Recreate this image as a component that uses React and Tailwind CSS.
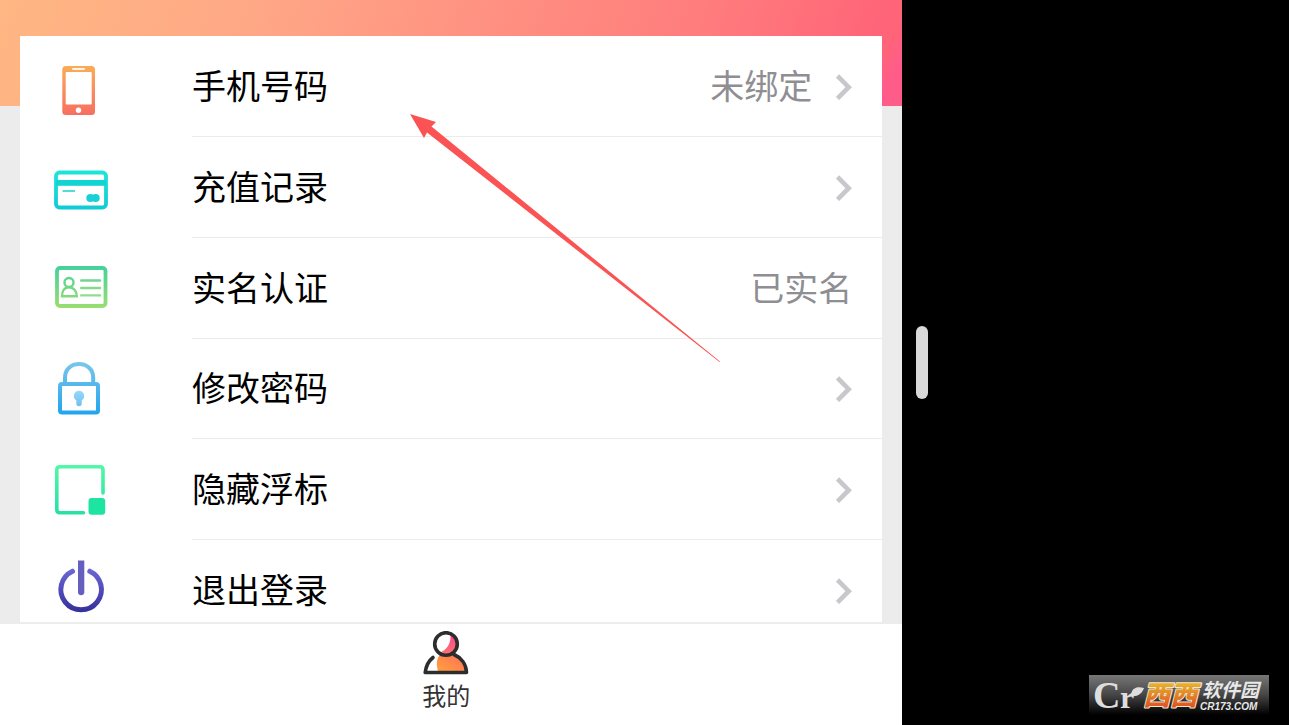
import React from "react";

function Gradient({ id, from, to, top = 0, bottom = 64 }) {
  return (
    <defs>
      <linearGradient id={id} gradientUnits="userSpaceOnUse" x1="0" y1={top} x2="0" y2={bottom}>
        <stop offset="0" stopColor={from} />
        <stop offset="1" stopColor={to} />
      </linearGradient>
    </defs>
  );
}

function IconFrame({ viewBox = "0 0 60 64", children }) {
  return (
    <svg className="h-16 w-[60px]" viewBox={viewBox} fill="none" aria-hidden="true">
      {children}
    </svg>
  );
}

function PhoneIcon() {
  return (
    <IconFrame>
      <Gradient id="phone" from="#f9ad58" to="#f86e62" top={12} bottom={61} />
      <rect x="12.3" y="12" width="32.7" height="49" rx="3.5" fill="url(#phone)" />
      <rect x="15.7" y="18" width="26" height="32.5" rx="1" fill="#fff" />
      <rect x="22" y="14" width="13" height="2" rx="1" fill="#fff3e0" />
      <circle cx="28.5" cy="56.3" r="2.7" fill="#fff" />
    </IconFrame>
  );
}

function CardIcon() {
  return (
    <IconFrame>
      <Gradient id="card" from="#1fe6d8" to="#0fcbd6" top={15} bottom={54} />
      <rect x="6" y="17.5" width="50" height="35" rx="3.5" stroke="url(#card)" strokeWidth="3.8" />
      <rect x="6" y="25" width="50" height="5.8" fill="#11d5d5" />
      <path d="M12.5 36H25" stroke="#3edad8" strokeWidth="1.8" />
      <circle cx="40.3" cy="43" r="4" fill="#18d0d5" />
      <circle cx="45.7" cy="43" r="4" fill="#18d0d5" />
    </IconFrame>
  );
}

function IdIcon() {
  return (
    <IconFrame>
      <Gradient id="idcard" from="#43d19c" to="#9ade70" top={10} bottom={52} />
      <g stroke="url(#idcard)">
        <rect x="7" y="12" width="48.5" height="38" rx="3" strokeWidth="3.8" />
        <circle cx="19" cy="26.5" r="4.5" strokeWidth="2.4" />
        <path d="M12 40.2C12 35 14.5 31.3 19 31.3C23.5 31.3 26.8 35 26.8 40.2Z" strokeWidth="2.4" />
      </g>
      <g strokeWidth="2.4" strokeLinecap="round">
        <path d="M31.2 24.5H50" stroke="#73d494" />
        <path d="M31.2 32H50" stroke="#85d98a" />
        <path d="M31.2 39.4H50" stroke="#8fdd91" />
      </g>
    </IconFrame>
  );
}

function LockIcon() {
  return (
    <IconFrame viewBox="0 -1 60 64">
      <Gradient id="lock" from="#7cc6ea" to="#1fa4ee" top={4} bottom={57} />
      <Gradient id="keyhole" from="#9cd6fb" to="#6bc0f0" top={33} bottom={48} />
      <g stroke="url(#lock)" strokeWidth="4">
        <path d="M15 26V19.5C15 11.5 21 6 29 6S43.2 11.5 43.2 19.5V26" />
        <rect x="10" y="26" width="38" height="28.5" rx="2" />
      </g>
      <path d="M29 32.7A5.2 5.2 0 0 0 26.3 42.3V45.5A2.7 2.7 0 0 0 31.7 45.5V42.3A5.2 5.2 0 0 0 29 32.7Z" fill="url(#keyhole)" />
    </IconFrame>
  );
}

function FloatIcon() {
  return (
    <IconFrame viewBox="0 -1 60 64">
      <Gradient id="float" from="#52f8a6" to="#26dfa4" top={6} bottom={56} />
      <path d="M53 34V11Q53 7.8 49.8 7.8H10Q6.8 7.8 6.8 11V50.5Q6.8 53.7 10 53.7H33.5" stroke="url(#float)" strokeWidth="3.6" strokeLinecap="round" />
      <rect x="38.5" y="39" width="16.7" height="16.7" rx="3" fill="#1de5a1" />
    </IconFrame>
  );
}

function PowerIcon() {
  return (
    <IconFrame viewBox="0 -1 60 64">
      <Gradient id="power" from="#6c68d6" to="#35309a" top={8} bottom={52} />
      <path d="M22.5 11.2A20.3 20.3 0 1 0 39.8 11.2" stroke="url(#power)" strokeWidth="5" strokeLinecap="round" />
      <path d="M28 0.5H34.3V32A3.1 3.1 0 0 1 28 32Z" fill="#6560bd" />
    </IconFrame>
  );
}

function Chevron() {
  return (
    <svg className="h-7 w-4" viewBox="0 0 16 28" fill="none" aria-hidden="true">
      <path d="M1.5 4L12.7 15.2L1.5 26.4" stroke="#c7c7cc" strokeWidth="4.6" />
    </svg>
  );
}

function ProfileIcon() {
  return (
    <svg className="h-11 w-[46px]" viewBox="0 0 46 44" fill="none" aria-hidden="true">
      <defs>
        <linearGradient id="body" x1="0" y1="1" x2="1" y2="0">
          <stop offset="0" stopColor="#ffa43c" />
          <stop offset="1" stopColor="#ff6c5c" />
        </linearGradient>
        <linearGradient id="head" x1="0" y1="0" x2="0" y2="1">
          <stop offset="0" stopColor="#ff4590" />
          <stop offset="1" stopColor="#ff7271" />
        </linearGradient>
      </defs>
      <path d="M16 42C12 34 14 26 18 23C26 26 37 20 43 36L44 42Z" fill="url(#body)" />
      <circle cx="23" cy="13" r="11.5" fill="#fff" />
      <path d="M27 2C29 10 25 19 16 22C23 26 34 23 34.5 13C34.5 7 31 3 27 2Z" fill="url(#head)" />
      <g stroke="#2d2d2d" strokeWidth="3.6" strokeLinecap="round" strokeLinejoin="round">
        <circle cx="23" cy="13" r="11.3" />
        <path d="M10 26.5C5.5 30 3 35 2.2 41.5H43.5C43.3 33 38 26.5 31 23.5" />
      </g>
    </svg>
  );
}

function Watermark() {
  return (
    <svg className="absolute right-5 bottom-2.5 h-10 w-[180px]" viewBox="0 0 180 40" role="img" aria-label="西西软件园 CR173.COM">
      <defs>
        <linearGradient id="plate" x1="0" y1="0" x2="0" y2="1">
          <stop offset="0" stopColor="#777" />
          <stop offset="0.5" stopColor="#454545" />
          <stop offset="1" stopColor="#000" />
        </linearGradient>
        <linearGradient id="orange" gradientUnits="userSpaceOnUse" x1="0" y1="8" x2="0" y2="34">
          <stop offset="0" stopColor="#e8b42c" />
          <stop offset="1" stopColor="#dc4a20" />
        </linearGradient>
      </defs>
      <rect width="180" height="40" fill="url(#plate)" />
      <g fill="#dedede" fontFamily="Liberation Serif, serif" fontWeight="700">
        <text x="4" y="33" fontSize="38">C</text>
        <text x="31" y="33" fontSize="32">r</text>
      </g>
      <path d="M42 21C42 13 48 11 55 13C53 19 48 22 42 21Z" fill="#dedede" />
      <g
        fill="url(#orange)"
        stroke="#f5e6d2"
        strokeWidth="2"
        strokeLinejoin="round"
        paintOrder="stroke"
        fontFamily="Noto Sans CJK SC, sans-serif"
        fontWeight="900"
        fontStyle="italic"
        fontSize="27"
      >
        <text x="54" y="30">西西</text>
      </g>
      <g fill="#e8e8e8" fontStyle="italic" fontWeight="700">
        <text x="113" y="22" fontFamily="Noto Sans CJK SC, sans-serif" fontSize="19">软件园</text>
        <text x="111" y="35" fontFamily="Liberation Sans, sans-serif" fontSize="10">CR173.COM</text>
      </g>
    </svg>
  );
}

const items = [
  { label: "手机号码", Icon: PhoneIcon, value: "未绑定", arrow: true },
  { label: "充值记录", Icon: CardIcon, arrow: true },
  { label: "实名认证", Icon: IdIcon, value: "已实名" },
  { label: "修改密码", Icon: LockIcon, arrow: true },
  { label: "隐藏浮标", Icon: FloatIcon, arrow: true },
  { label: "退出登录", Icon: PowerIcon, arrow: true },
];

export default function App() {
  return (
    <div className="relative flex h-screen overflow-hidden bg-black font-['Noto_Sans_CJK_SC',sans-serif]">
      <div className="flex w-[70%] flex-col bg-[#ececec]">
        <main className="min-h-0 flex-1 overflow-hidden">
          <div className="h-[106px] bg-[linear-gradient(125deg,transparent_94%,#ff5c8a_97%),linear-gradient(110deg,#ffb783_0%,#ffa886_27%,#ff9382_50%,#ff7d7d_75%,#ff6478_95%,#ff6478_100%)]" />
          <ul className="mx-5 -mt-[70px] grid h-[605px] grid-rows-6 bg-white">
            {items.map(({ label, Icon, value, arrow }) => (
              <li key={label}>
                <button type="button" className="flex h-full w-full items-center pl-[30px] text-left text-[34px] leading-none">
                  <span className="flex w-[142px] shrink-0">
                    <Icon />
                  </span>
                  <span className="flex h-full flex-1 items-center gap-6 border-b border-[#ececec] pr-[30px]">
                    <span className="flex-1 pb-[2px] text-black">{label}</span>
                    {value && <span className="pb-[2px] text-[#8e8e93]">{value}</span>}
                    {arrow && <Chevron />}
                  </span>
                </button>
              </li>
            ))}
          </ul>
        </main>
        <nav className="flex h-[103px] shrink-0 justify-center border-t-2 border-[#ececec] bg-white pr-2.5">
          <a href="#mine" className="flex flex-col items-center gap-1.5 pt-[7px] text-2xl leading-7 text-[#333]">
            <ProfileIcon />
            <span>我的</span>
          </a>
        </nav>
      </div>
      <div className="flex flex-1 items-center pl-3.5">
        <div role="separator" aria-orientation="vertical" className="h-[73px] w-3 rounded-full bg-[#d9d9d9]" />
      </div>
      <svg className="pointer-events-none absolute top-[100px] left-[400px] h-[270px] w-[330px]" viewBox="0 0 330 270" aria-hidden="true">
        <path d="M10 14L36 22L31.5 26.5L320 261.5L319.5 262L27 32.5L24 38Z" fill="#fb5353" />
      </svg>
      <Watermark />
    </div>
  );
}
